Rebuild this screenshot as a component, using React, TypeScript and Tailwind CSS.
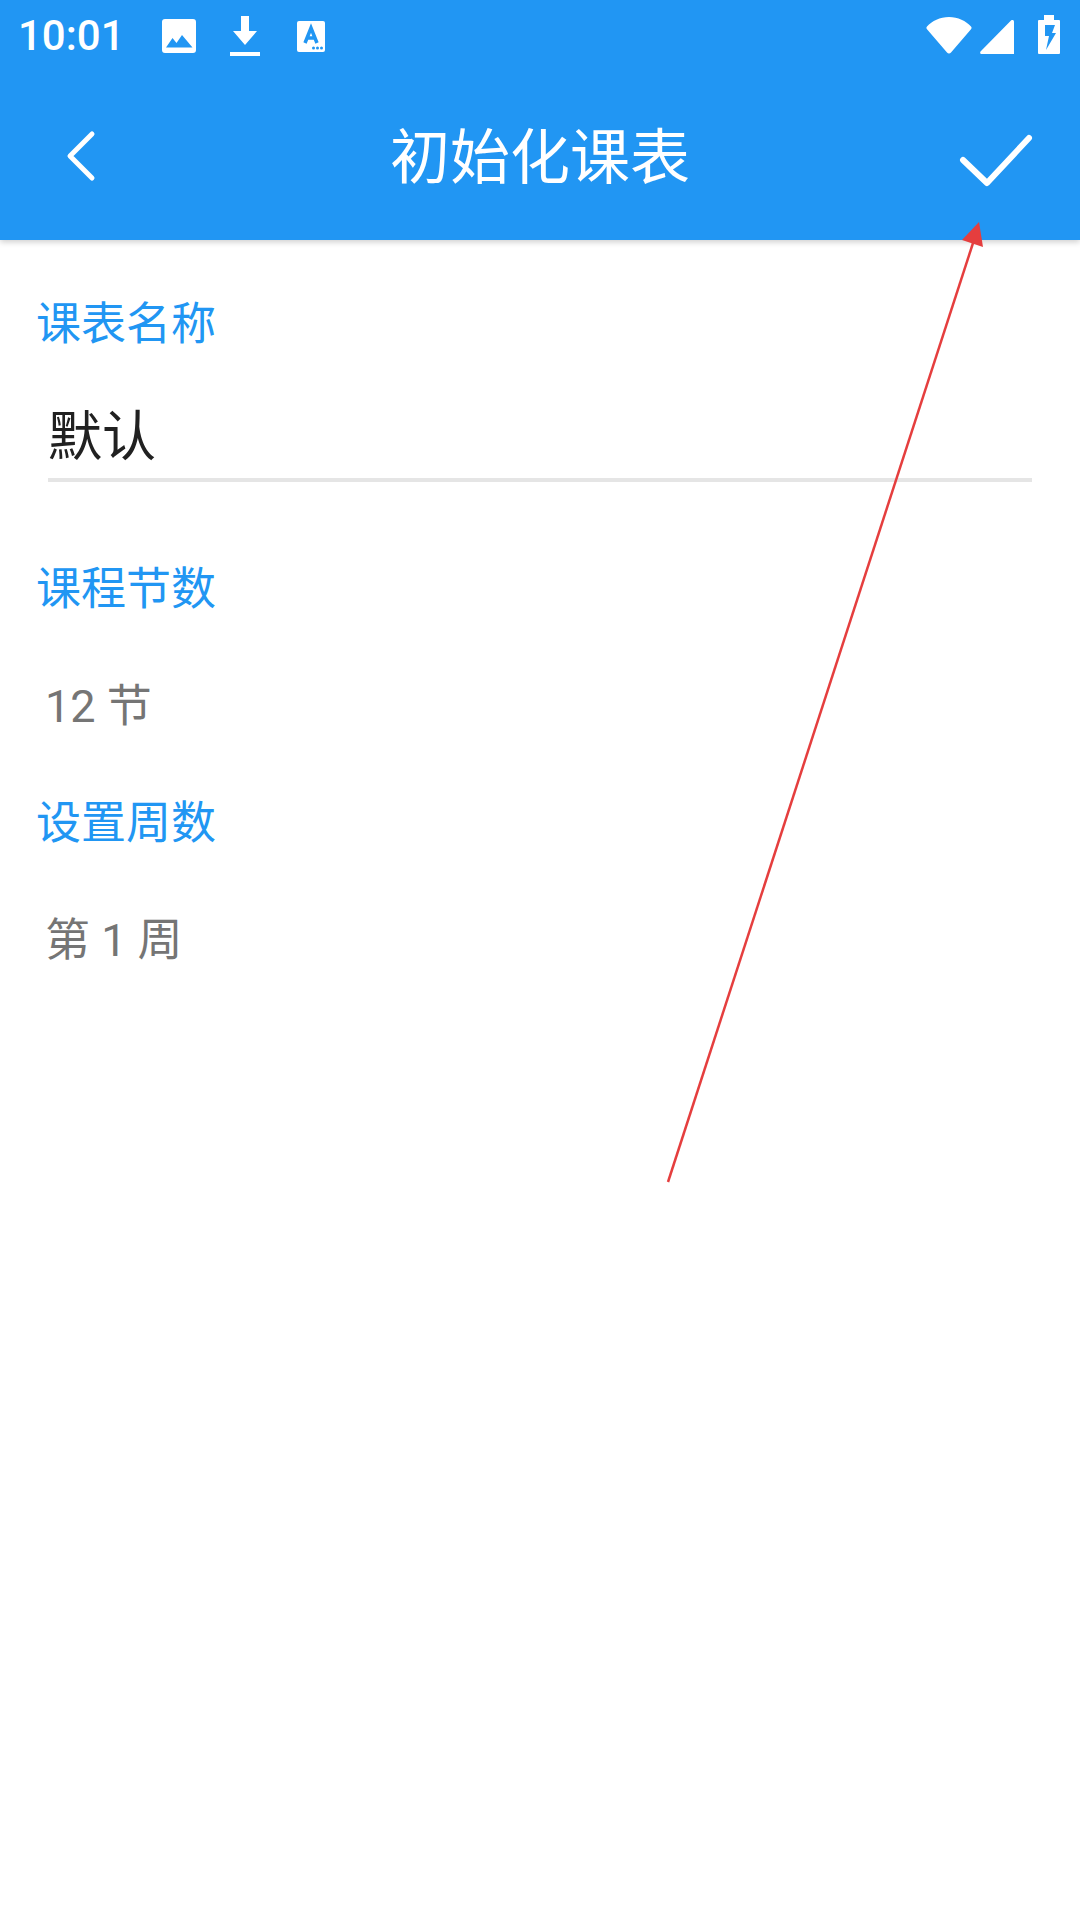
const CJK = "font-['Roboto','Noto_Sans_CJK_SC',sans-serif]";

function ImageIcon() {
  return (
    <svg width="36" height="36" viewBox="0 0 36 36" className="shrink-0">
      <path fill="#fff" fillRule="evenodd" d="M4 1h28a3 3 0 0 1 3 3v28a3 3 0 0 1-3 3H4a3 3 0 0 1-3-3V4a3 3 0 0 1 3-3zM5 29.500h26.500L21 17l-5.500 8-4-5z" />
    </svg>
  );
}

function DownloadIcon() {
  return (
    <svg width="30" height="40" viewBox="0 0 30 40" className="shrink-0">
      <path fill="#fff" d="M11 0h8v15h8L15 29 3 15h8zM0 36h30v4H0z" />
    </svg>
  );
}

function FontIcon() {
  return (
    <svg width="28" height="31" viewBox="0 0 28 31" className="shrink-0">
      <path fill="#fff" d="M2 0h24a2 2 0 0 1 2 2v27a2 2 0 0 1-2 2H2a2 2 0 0 1-2-2V2a2 2 0 0 1 2-2z" />
      <path fill="none" stroke="#2196f3" strokeWidth="3.500" d="M8 22l6-15 6 15M10 17h8" />
      <circle cx="16.500" cy="27" r="1.500" fill="#2196f3" />
      <circle cx="20.500" cy="27" r="1.500" fill="#2196f3" />
      <circle cx="24.500" cy="27" r="1.500" fill="#2196f3" />
    </svg>
  );
}

function WifiIcon() {
  return (
    <svg width="46" height="37" viewBox="0 0 46 37" className="shrink-0 -mt-[2px]">
      <path fill="#fff" d="M1 9.500C6 4 14 0 23 0s17 4 22 9.500c.8.900.8 1.800 0 2.800L25 35.500c-1.100 1.400-2.900 1.400-4 0L1 12.300c-.8-1-.8-1.900 0-2.800z" />
    </svg>
  );
}

function SignalIcon() {
  return (
    <svg width="34" height="34" viewBox="0 0 34 34" className="shrink-0 mt-[2px]">
      <path fill="#fff" d="M31 .500c1.500-1 3-.5 3 1.500v32H2c-2 0-2.500-1.500-1-3z" />
    </svg>
  );
}

function BatteryIcon() {
  return (
    <svg width="22" height="39" viewBox="0 0 22 39" className="shrink-0 -mt-[3px]">
      <path fill="#fff" d="M6 0h10v5h5a1 1 0 0 1 1 1v32a1 1 0 0 1-1 1H1a1 1 0 0 1-1-1V6a1 1 0 0 1 1-1h5z" />
      <path fill="#2196f3" d="M7 10h10l-3 8h4l-10 17 3-14H7z" />
    </svg>
  );
}

function Field({ label, value }: { label: string; value: string }) {
  return (
    <div className="flex flex-col">
      <div className="pl-[36px] text-[45px] leading-[64px] text-[#2196f3]">{label}</div>
      <div className="pl-[45px] pt-[53px] text-[45px] leading-[64px] text-[#757575]">{value}</div>
    </div>
  );
}

export default function App() {
  return (
    <div className={`relative w-[1080px] h-[1920px] bg-white overflow-hidden ${CJK}`}>
      <header className="h-[240px] bg-[#2196f3] text-white shadow-[0_2px_6px_rgba(0,0,0,0.2)] flex flex-col">
        <div className="h-[72px] flex items-center pl-[18px] pr-[20px]">
          <span className="text-[42px] leading-none font-['Roboto',sans-serif] font-medium w-[143px]">10:01</span>
          <ImageIcon />
          <div className="ml-[33px] flex"><DownloadIcon /></div>
          <div className="ml-[37px] flex"><FontIcon /></div>
          <div className="ml-auto flex items-center">
            <WifiIcon />
            <div className="ml-[8px] flex"><SignalIcon /></div>
            <div className="ml-[24px] flex"><BatteryIcon /></div>
          </div>
        </div>
        <div className="flex-1 grid grid-cols-[1fr_auto_1fr] items-center pl-[66px] pr-[46px]">
          <svg width="30" height="52" viewBox="0 0 30 52">
            <path fill="none" stroke="#fff" strokeWidth="5" strokeLinecap="round" strokeLinejoin="round" d="M26 4L4 26l22 22" />
          </svg>
          <h1 className="text-[60px] leading-none font-normal pt-[6px] -translate-x-[10px]">初始化课表</h1>
          <svg width="76" height="66" viewBox="0 0 76 66" className="justify-self-end">
            <path fill="none" stroke="#fff" strokeWidth="6" strokeLinecap="round" strokeLinejoin="round" d="M5 37l24 23 42-45" />
          </svg>
        </div>
      </header>

      <main className="flex flex-col pt-[53px]">
        <div className="pl-[36px] text-[45px] leading-[64px] text-[#2196f3]">课表名称</div>
        <div className="mx-[48px] mt-[29px] h-[96px] pt-[11px] border-b-4 border-[#e5e5e5] text-[54px] leading-[82px] text-[#212121]">
          默认
        </div>
        <div className="flex flex-col gap-[53px] mt-[76px]">
          <Field label="课程节数" value="12 节" />
          <Field label="设置周数" value="第 1 周" />
        </div>
      </main>

      {/* red annotation arrow lying over the page */}
      <svg width="1080" height="1920" viewBox="0 0 1080 1920" className="absolute inset-0 pointer-events-none">
        <line x1="668" y1="1182" x2="974" y2="240" stroke="#e53e3e" strokeWidth="2.500" />
        <path fill="#e53e3e" d="M979 222l-17 18 21 7z" />
      </svg>
    </div>
  );
}
